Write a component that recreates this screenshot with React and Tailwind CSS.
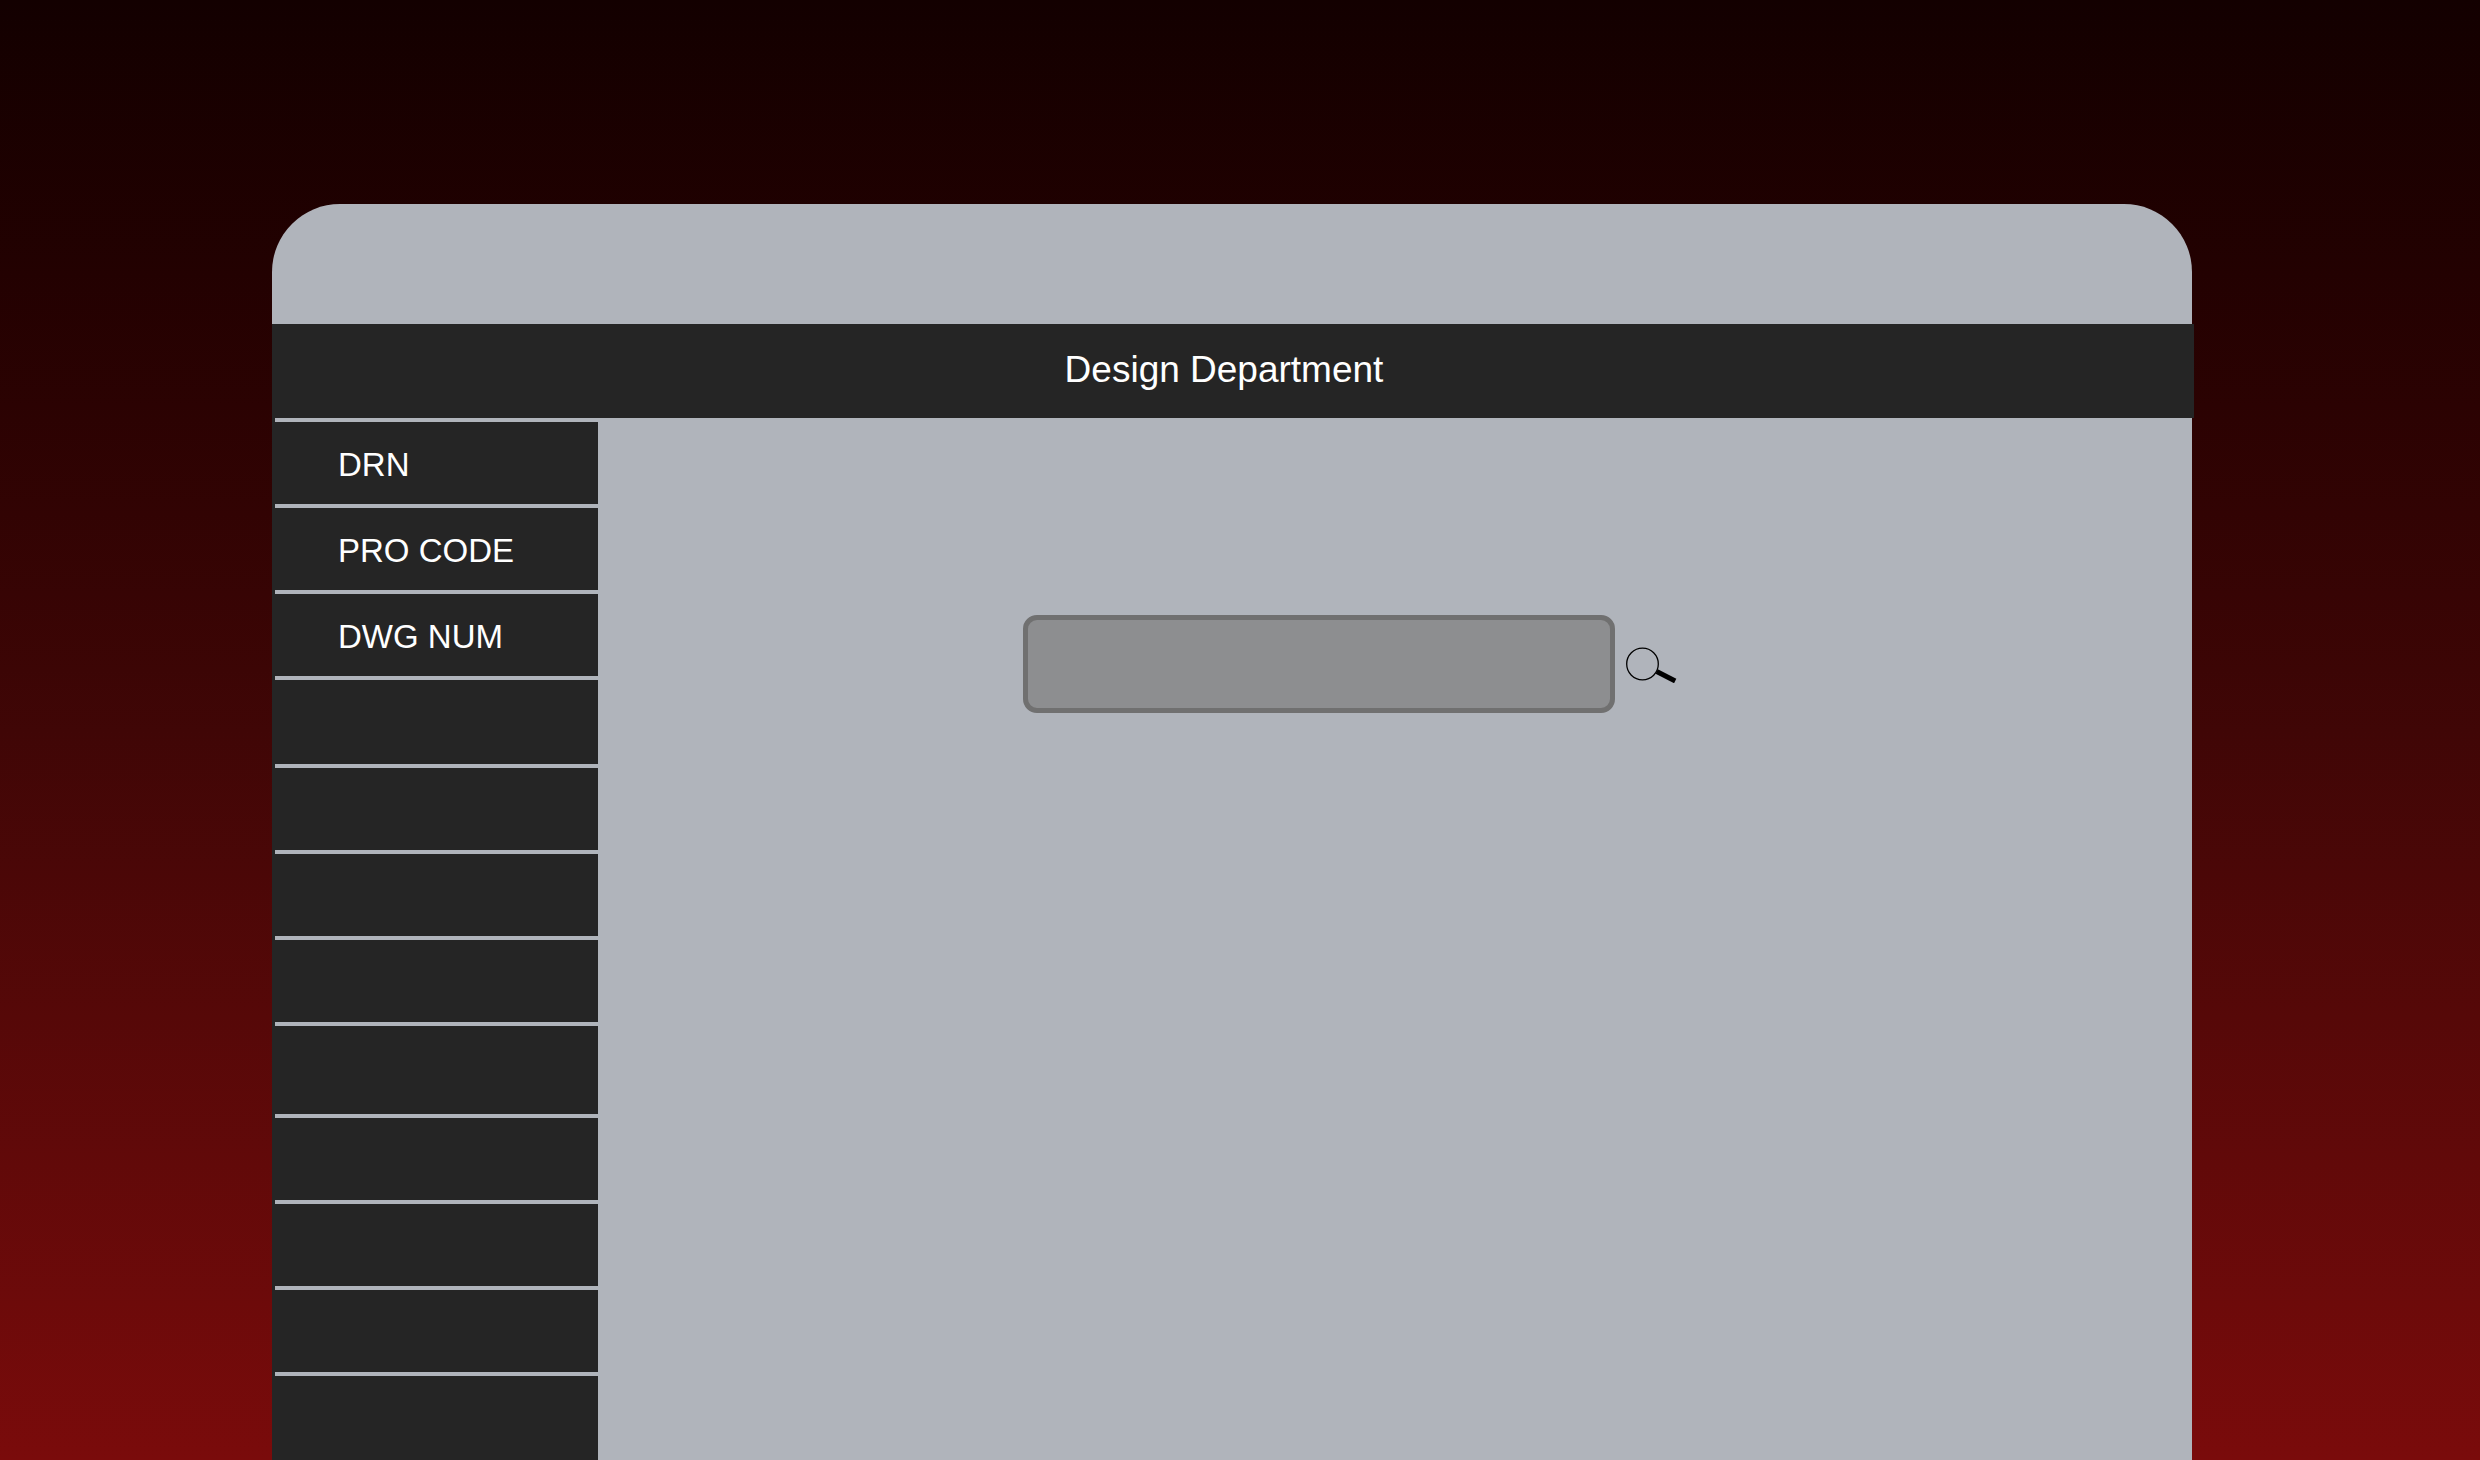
const sections = [
  { label: "DRN", height: "h-[86px]" },
  { label: "PRO CODE", height: "h-[86px]" },
  { label: "DWG NUM", height: "h-[86px]" },
  { label: "", height: "h-[88px]" },
  { label: "", height: "h-[86px]" },
  { label: "", height: "h-[86px]" },
  { label: "", height: "h-[86px]" },
  { label: "", height: "h-[92px]" },
  { label: "", height: "h-[86px]" },
  { label: "", height: "h-[86px]" },
  { label: "", height: "h-[86px]" },
  { label: "", height: "h-[88px]" },
];

function SearchIcon() {
  return (
    <svg width="52" height="38" viewBox="0 0 52 38" aria-hidden="true">
      <circle cx="16.5" cy="19" r="15.8" fill="none" stroke="#000" strokeWidth="1.3" />
      <path d="M30.7 26.6 L49.2 36" stroke="#000" strokeWidth="5" fill="none" />
    </svg>
  );
}

function Sidebar() {
  return (
    <nav aria-label="Sections" className="w-[326px] shrink-0 bg-[#252525] pl-[3px]">
      <ul>
        {sections.map((section, index) => (
          <li key={index} className={`${section.height} border-t-4 border-[#b0b4bb]`}>
            <button
              type="button"
              aria-label={section.label || `Section ${index + 1}`}
              className="flex h-full w-full items-center pt-1 pl-[63px] text-left text-[33px] leading-10 text-white"
            >
              {section.label}
            </button>
          </li>
        ))}
      </ul>
    </nav>
  );
}

function SearchForm() {
  return (
    <form
      role="search"
      className="flex items-center gap-[11px]"
      onSubmit={(event) => event.preventDefault()}
    >
      <input
        type="text"
        aria-label="Search drawings"
        className="h-[98px] w-[592px] rounded-[14px] border-[5px] border-[#707070] bg-[#8d8e90] px-6 text-[33px] text-white outline-none"
      />
      <button type="submit" aria-label="Search">
        <SearchIcon />
      </button>
    </form>
  );
}

export default function App() {
  return (
    <div className="flex min-h-screen flex-col bg-linear-to-b from-[#130000] via-[#400606] to-[#7a0b0b] pt-[204px] pr-[288px] pl-[272px] font-['Liberation_Sans',Arial,sans-serif]">
      <div className="flex grow flex-col rounded-t-[68px] bg-[#b0b4bb]">
        <div className="h-[120px]" />
        <header className="-mr-0.5 flex h-[94px] items-center justify-center bg-[#252525] pr-[18px] pb-0.5">
          <h1 className="text-[37px] leading-10 text-white">Design Department</h1>
        </header>
        <div className="flex grow">
          <Sidebar />
          <main className="flex grow items-start justify-center pt-[197px] pr-[90px]">
            <SearchForm />
          </main>
        </div>
      </div>
    </div>
  );
}
